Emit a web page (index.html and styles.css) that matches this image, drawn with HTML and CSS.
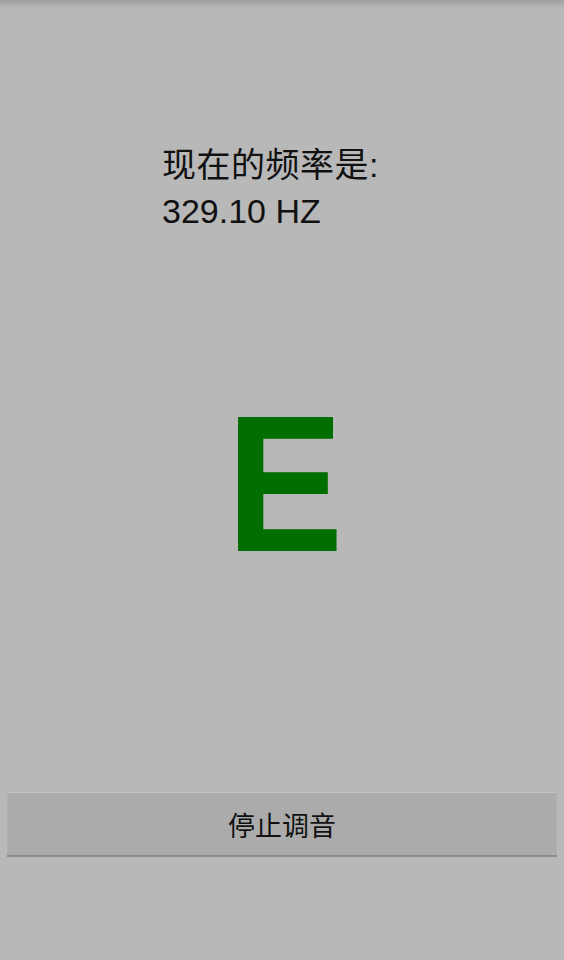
FILE: index.html
```html
<!DOCTYPE html>
<html lang="zh">
<head>
<meta charset="utf-8">
<link rel="stylesheet" href="styles.css">
</head>
<body>
<div class="screen">
  <div class="readout">
    <div class="label">现在的频率是:</div>
    <div class="value">329.10 HZ</div>
  </div>
  <div class="note"><span class="note-letter">E</span></div>
  <div class="bottom">
    <button class="stop">停止调音</button>
  </div>
</div>
</body>
</html>
```
FILE: styles.css
```css
html, body {
  margin: 0;
  padding: 0;
  background: #b8b8b8;
}
.screen {
  width: 564px;
  height: 960px;
  display: flex;
  flex-direction: column;
  background: linear-gradient(to bottom, #9e9e9e 0px, #b3b3b3 6px, #b8b8b8 10px);
  box-sizing: border-box;
  font-family: "Liberation Sans", "Noto Sans CJK SC", sans-serif;
  color: #111;
}
.readout {
  padding: 142px 0 0 162px;
  font-size: 34px;
  line-height: 46px;
}
.label {
  letter-spacing: 0.5px;
}
.note {
  margin-top: 153px;
  padding-left: 5px;
  text-align: center;
  font-family: "Liberation Sans", sans-serif;
  font-weight: bold;
  font-size: 194px;
  line-height: 194px;
  color: #006e00;
}
.note-letter {
  display: inline-block;
  transform: scaleX(0.905);
}
.bottom {
  margin-top: auto;
  padding: 0 7px 105px 7px;
}
.stop {
  display: block;
  width: 100%;
  height: 63px;
  margin: 0;
  background: #ababab;
  border: none;
  border-top: 1px solid #c2c2c2;
  border-left: 1px solid #b0b0b0;
  border-right: 1px solid #b0b0b0;
  box-shadow: 0 2px 0 #8c8c8c;
  font-family: "Noto Sans CJK SC", sans-serif;
  font-size: 27px;
  color: #111;
  padding: 0;
}
```
